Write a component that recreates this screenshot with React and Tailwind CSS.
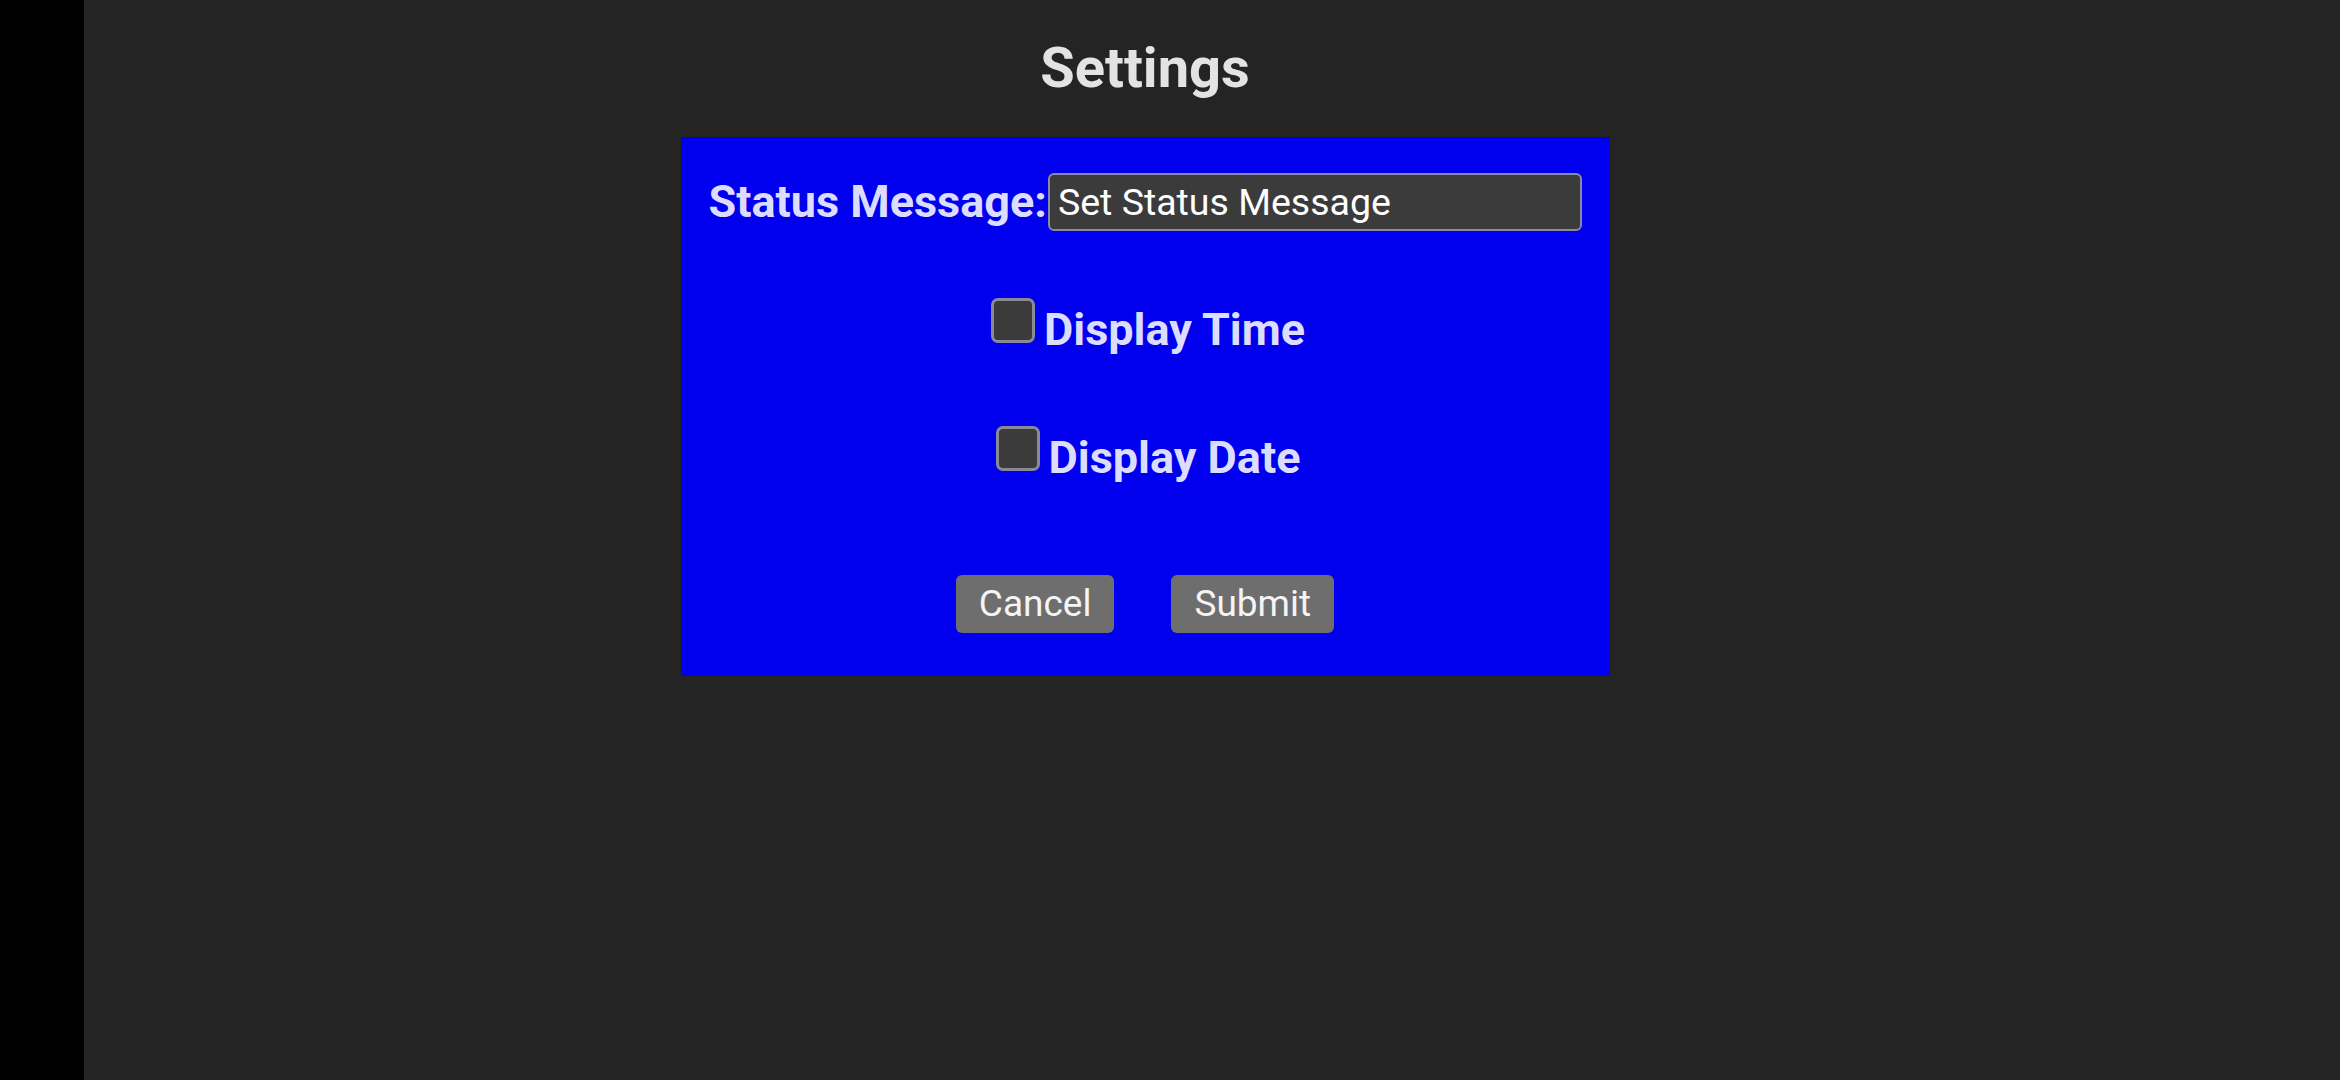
import { useState } from 'react'

function CheckRow({ label, checked, onToggle, className }) {
  return (
    <div className={`text-center text-[45px] font-bold text-[#dcdcff] leading-normal ${className}`}>
      <span
        role="checkbox"
        aria-checked={checked}
        onClick={onToggle}
        className="inline-block align-baseline w-[44px] h-[45px] ml-[6px] mr-[9px] mb-[2px] rounded-[7px] border-[3px] border-[#8a8a96] bg-[#3b3b3b] cursor-pointer"
      />
      <span onClick={onToggle} className="cursor-pointer">{label}</span>
    </div>
  )
}

export default function App() {
  const [status, setStatus] = useState('')
  const [showTime, setShowTime] = useState(false)
  const [showDate, setShowDate] = useState(false)

  return (
    <div className="flex w-full h-[1080px] bg-[#242424] font-['Roboto',sans-serif]">
      <aside className="w-[84px] shrink-0 bg-black" />

      <main className="flex-1 flex flex-col items-center pt-[26px] pr-[134px]">
        <h1 className="text-[56px] font-bold leading-normal text-[#e3e3e3]">Settings</h1>

        <div className="mt-[27px] w-[929px] bg-[#0000ee] pt-[31px] pb-[43px] px-[28px]">
          <div className="flex items-center">
            <label className="shrink-0 text-[45px] font-bold leading-normal text-[#dcdcff]">
              Status Message:
            </label>
            <input
              value={status}
              onChange={(e) => setStatus(e.target.value)}
              placeholder="Set Status Message"
              className="flex-1 min-w-0 h-[58px] ml-[1px] pl-[8px] rounded-[6px] border-2 border-[#8a8aa6] bg-[#3b3b3b] text-[37.5px] text-white placeholder:text-white outline-none"
            />
          </div>

          <CheckRow
            label="Display Time"
            checked={showTime}
            onToggle={() => setShowTime((v) => !v)}
            className="mt-[60px]"
          />
          <CheckRow
            label="Display Date"
            checked={showDate}
            onToggle={() => setShowDate((v) => !v)}
            className="mt-[61px]"
          />

          <div className="mt-[83px] flex justify-center gap-[57px]">
            <button className="h-[58px] px-[23px] rounded-[6px] bg-[#6e6e6e] text-[37px] leading-none text-[#f5f5f5]">
              Cancel
            </button>
            <button className="h-[58px] px-[23px] rounded-[6px] bg-[#6e6e6e] text-[37px] leading-none text-[#f5f5f5]">
              Submit
            </button>
          </div>
        </div>
      </main>
    </div>
  )
}
